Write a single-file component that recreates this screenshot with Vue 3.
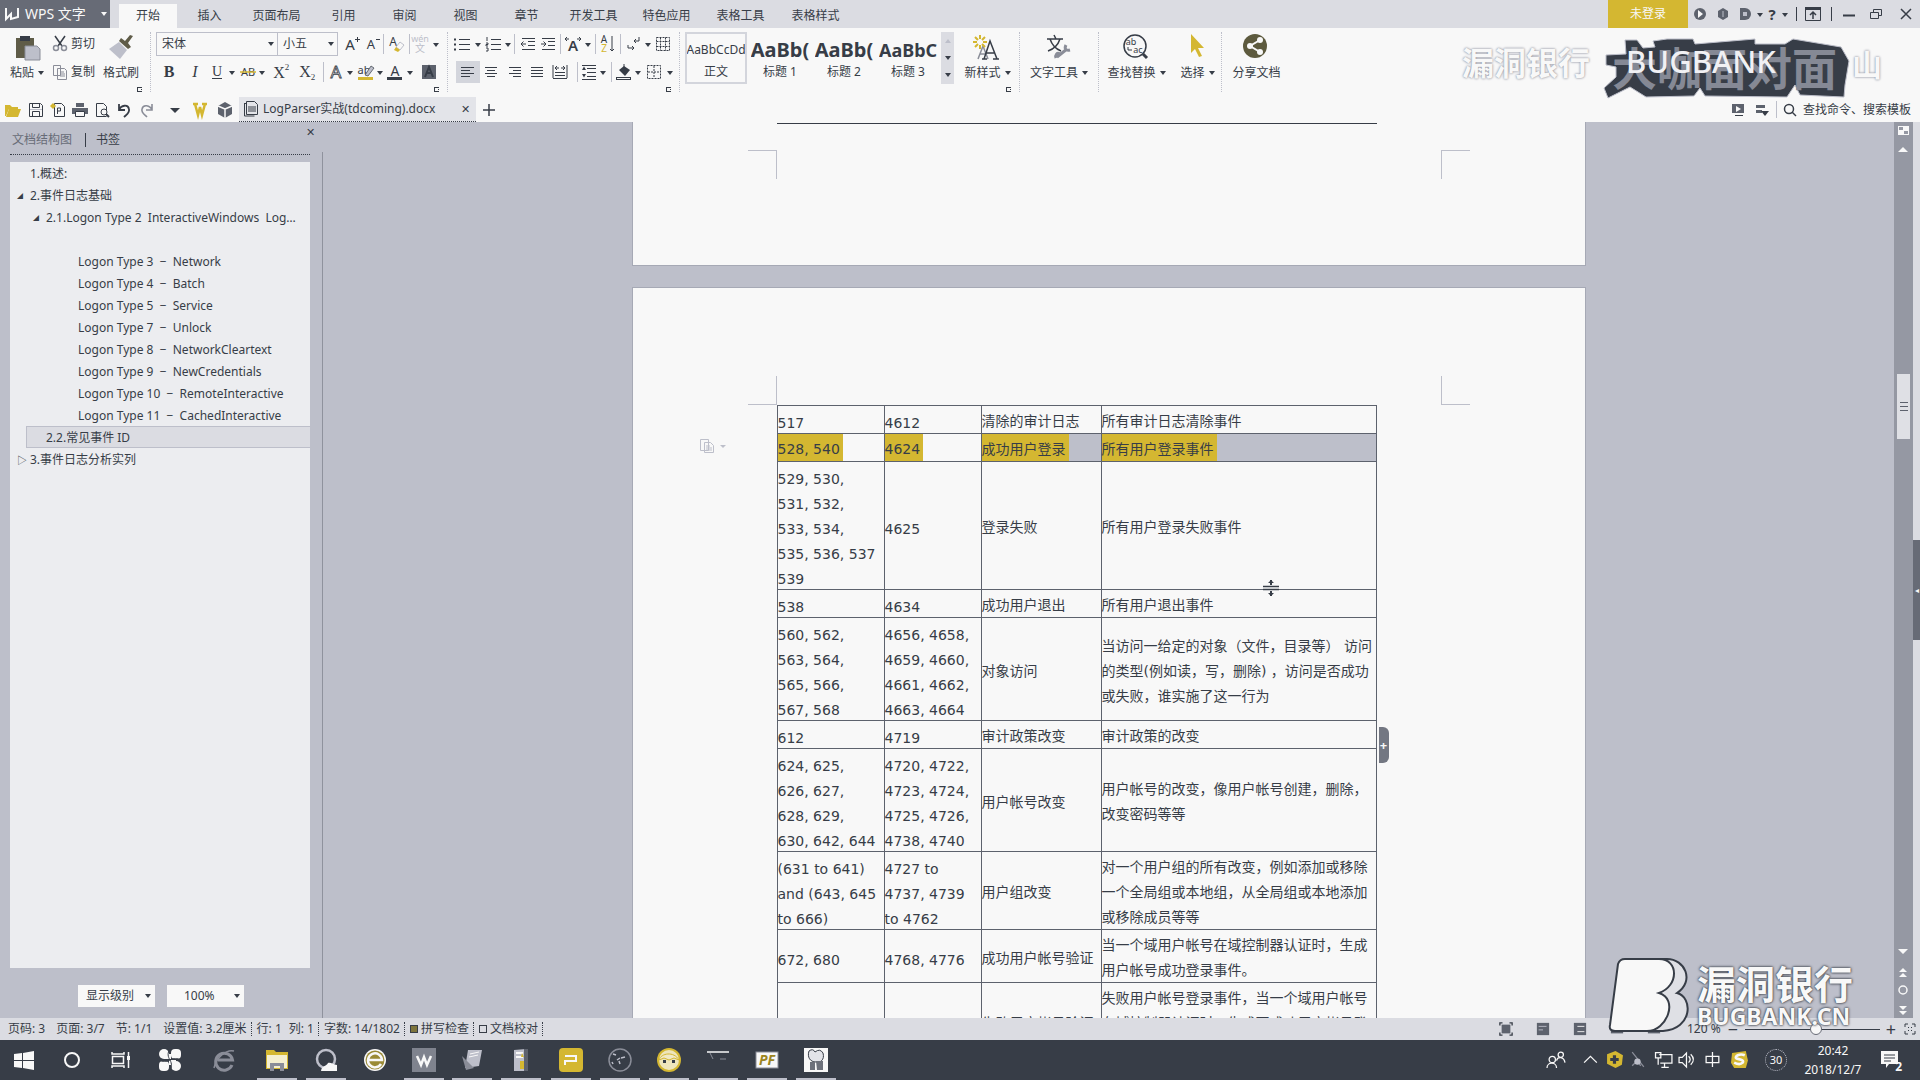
<script setup>
const D = '#373d47'
const G = '#bdbfca'
const Y = '#d4b731'
const W = '#f8f8f8'

const tabs = ['插入', '页面布局', '引用', '审阅', '视图', '章节', '开发工具', '特色应用', '表格工具', '表格样式']

const arrow = { w: 10, label: '更多', d: `<path d="M5 7h6l-3 4z" fill="${D}"/>` }
const arr = (w) => ({ ...arrow, w })
const sep = (w) => ({ w, sep: true })
const lines = (list) => list.map(([x, y, w]) => `<path d="M${x} ${y}h${w}" stroke="${D}" stroke-width="1"/>`).join('')
const glyph = (t, extra = '') =>
  `<text x="8" y="13" text-anchor="middle" font-family="Liberation Serif, serif" font-size="16" fill="${D}" ${extra}>${t}</text>`

const fontRow1 = [
  { w: 22, label: '增大字号', d: `<text x="7" y="14" text-anchor="middle" font-family="Noto Sans, sans-serif" font-size="15" fill="${D}">A</text><path d="M12 3.500h5M14.500 1v5" stroke="${D}" fill="none"/>` },
  { w: 20, label: '减小字号', d: `<text x="7" y="13" text-anchor="middle" font-family="Noto Sans, sans-serif" font-size="13" fill="${D}">A</text><path d="M12 3.500h4" stroke="${D}"/>` },
  sep(2),
  { w: 24, label: '清除格式', d: `<text x="5" y="10" text-anchor="middle" font-family="Noto Sans, sans-serif" font-size="12" fill="${D}">A</text><path d="M8 11l4-5 4 3-4 5z" fill="${W}" stroke="${G}"/><path d="M8 11l4 3-2 2-4-2z" fill="${Y}"/>` },
  sep(2),
  { w: 20, label: '拼音指南', d: `<text x="8" y="6" text-anchor="middle" font-family="Noto Sans, sans-serif" font-size="9" fill="${G}">wén</text><text x="8" y="16" text-anchor="middle" font-family="Noto Sans CJK SC, sans-serif" font-size="10" fill="${G}">文</text>` },
  arr(12)
]
const fontRow2 = [
  { w: 26, label: '加粗', d: glyph('B', 'font-weight="bold"') },
  { w: 26, label: '倾斜', d: glyph('I', 'font-style="italic"') },
  { w: 18, label: '下划线', d: `<text x="8" y="12" text-anchor="middle" font-family="Liberation Serif, serif" font-size="14" fill="${D}">U</text>` + lines([[3, 14.5, 10]]) },
  arr(12),
  { w: 20, label: '删除线', d: `<text x="8" y="12" text-anchor="middle" font-family="Noto Sans, sans-serif" font-size="11" fill="${D}">AB</text><path d="M0 8h16" stroke="${Y}" stroke-width="1.500"/>` },
  arr(8),
  { w: 30, label: '上标', d: `<text x="6" y="14" text-anchor="middle" font-family="Liberation Serif, serif" font-size="16" fill="${D}">X</text><text x="14" y="6" text-anchor="middle" font-family="Liberation Serif, serif" font-size="9" fill="${D}">2</text>` },
  { w: 22, label: '下标', d: `<text x="6" y="13" text-anchor="middle" font-family="Liberation Serif, serif" font-size="16" fill="${D}">X</text><text x="14" y="16" text-anchor="middle" font-family="Liberation Serif, serif" font-size="9" fill="${D}">2</text>` },
  sep(10),
  { w: 16, label: '文字效果', d: `<text x="8" y="14" text-anchor="middle" font-family="Noto Sans, sans-serif" font-size="17" fill="${W}" stroke="${D}" stroke-width="0.800">A</text>` },
  arr(12),
  { w: 20, label: '突出显示', d: `<text x="6" y="10" text-anchor="middle" font-family="Noto Sans, sans-serif" font-size="11" fill="${D}">ab</text><path d="M7 11l6-9 3 2-6 8z" fill="${G}" stroke="${D}" stroke-width="0.700"/><path d="M0 14.500h15" stroke="${Y}" stroke-width="3"/>` },
  arr(8),
  { w: 22, label: '字体颜色', d: `<text x="8" y="12" text-anchor="middle" font-family="Noto Sans, sans-serif" font-size="14" fill="${D}">A</text><path d="M0 14.500h15" stroke="${D}" stroke-width="3"/>` },
  arr(8),
  { w: 30, label: '字符底纹', d: `<rect x="1" y="1" width="14" height="14" fill="#5d626d"/><path d="M4 13l4-10 4 10M6 9h4" stroke="${D}" stroke-width="2" fill="none"/>` }
]
const paraRow1 = [
  { w: 22, label: '项目符号', d: lines([[5, 3.5, 11], [5, 8.5, 11], [5, 13.5, 11]]) + `<path d="M0 2.500h2v2H0zM0 7.500h2v2H0zM0 12.500h2v2H0z" fill="${D}"/>` },
  arr(9),
  { w: 21, label: '编号', d: lines([[6, 3.5, 10], [6, 8.5, 10], [6, 13.5, 10]]) + `<path d="M2 1v4M1 7h2v1.500H1V10h2M1 12h2v3H1" fill="none" stroke="${D}"/>` },
  arr(9),
  sep(5),
  { w: 21, label: '减少缩进', d: lines([[2, 2.5, 13], [8, 5.5, 7], [8, 9.5, 7], [2, 13.5, 13]]) + `<path d="M6 8H1M3.500 5.500L1 8l2.500 2.500" fill="none" stroke="${D}"/>` },
  { w: 20, label: '增加缩进', d: lines([[2, 2.5, 13], [8, 5.5, 7], [8, 9.5, 7], [2, 13.5, 13]]) + `<path d="M1 8h5M3.500 5.500L6 8l-2.500 2.500" fill="none" stroke="${D}"/>` },
  sep(5),
  { w: 20, label: '中文版式', d: `<text x="8" y="15" text-anchor="middle" font-family="Noto Sans, sans-serif" font-size="15" font-weight="600" fill="${D}">A</text><path d="M4 3H0M2 1L0 3l2 2M12 3h4M14 1l2 2-2 2" fill="none" stroke="${D}"/>` },
  arr(9),
  sep(6),
  { w: 18, label: '排序', d: `<text x="5" y="7" text-anchor="middle" font-family="Noto Sans, sans-serif" font-size="10" fill="${D}">A</text><text x="5" y="16" text-anchor="middle" font-family="Noto Sans, sans-serif" font-size="10" fill="${Y}">Z</text><path d="M13 0v15M11 13l2 2 2-2" fill="none" stroke="${D}"/>` },
  sep(8),
  { w: 20, label: '编辑标记', d: `<path d="M13 1v4H8M10 3L8 5l2 2M2 12h6M6 10l2 2-2 2M2 9v3" fill="none" stroke="${D}"/>` },
  arr(7),
  { w: 24, label: '插入表格', d: `<path d="M1.500 1.500h13v13h-13zM1.500 5.500h13M1.500 10.500h13M5.500 1.500v13M10.500 1.500v13" fill="none" stroke="${D}" stroke-dasharray="2 1"/>` }
]
const paraRow2 = [
  { w: 24, label: '左对齐', on: true, d: lines([[1, 3.5, 13], [1, 6.5, 9], [1, 9.5, 13], [1, 12.5, 9]]) },
  { w: 22, label: '居中', d: lines([[2, 3.5, 12], [4, 6.5, 8], [2, 9.5, 12], [4, 12.5, 8]]) },
  { w: 26, label: '右对齐', d: lines([[2, 3.5, 12], [6, 6.5, 8], [2, 9.5, 12], [6, 12.5, 8]]) },
  { w: 18, label: '两端对齐', d: lines([[2, 3.5, 12], [2, 6.5, 12], [2, 9.5, 12], [2, 12.5, 12]]) },
  { w: 28, label: '分散对齐', d: lines([[3, 8.5, 10], [3, 11.5, 10], [1, 14.5, 14]]) + `<path d="M1 1v13M15 1v13M3 4h4M9 4h4M5 2L3 4l2 2M11 2l2 2-2 2" fill="none" stroke="${D}"/>` },
  sep(6),
  { w: 18, label: '行距', d: lines([[6, 4.5, 9], [6, 8.5, 9], [6, 12.5, 9], [1, 1.5, 14], [1, 15.5, 14]]) + `<path d="M3 2.500L1 6h4zM3 13.500L1 10h4z" fill="${D}"/>` },
  arr(10),
  sep(6),
  { w: 20, label: '底纹颜色', d: `<path d="M3 6l5-4 6 4-5 6z" fill="${D}"/><path d="M8 5V0" stroke="${D}"/><rect x="0.500" y="13.500" width="14" height="2" fill="${W}" stroke="${D}"/>` },
  arr(8),
  { w: 24, label: '边框', d: `<path d="M1.500 1.500h13v13h-13zM8 2v12M2 8h12" fill="none" stroke="${D}" stroke-dasharray="2 1"/>` },
  arr(8)
]

const quick = [
  { w: 25, label: '打开', d: `<path d="M0 3h5l2 2h6v2H4l-3 7H0z" fill="${Y}"/><path d="M4 7h12l-3 8H1z" fill="${Y}"/>` },
  { w: 22, label: '保存', d: `<path d="M1.500 1.500h11l2 2v11h-13zM4.500 1.500v4h7v-4M4.500 14.500v-5h7v5" fill="none" stroke="${D}"/><path d="M2 7h12v1H2z" fill="${G}"/>` },
  { w: 22, label: '输出PDF', d: `<path d="M4.500 1.500h7l3 3v10h-10zM7.500 12V6h3v3h-3" fill="none" stroke="${D}"/><path d="M0 4l3-3 3 3-3 3z" fill="${Y}"/>` },
  { w: 22, label: '打印', d: `<path d="M4 1h8v4H4zM0 6h16v6H0z" fill="#5d626d"/><path d="M3.500 9.500h9v5h-9z" fill="${W}" stroke="${D}"/>` },
  { w: 22, label: '打印预览', d: `<path d="M12.500 14.500h-10v-13h7l3 3V8" fill="none" stroke="${D}"/><circle cx="10" cy="10" r="3" fill="${W}" stroke="${D}"/><path d="M12 12l3 3" stroke="${D}" stroke-width="2"/>` },
  { w: 22, label: '撤消', d: `<path d="M3 2v6h6M3 8c2-5 9-6 10-1 1 4-3 6-5 8" fill="none" stroke="${D}" stroke-width="1.800"/>` },
  { w: 24, label: '恢复', d: `<path d="M13 2v6H7M13 8C11 3 4 2 3 7c-1 4 3 6 5 8" fill="none" stroke="#8a8d98" stroke-width="1.600"/>` },
  { w: 31, label: '自定义', d: `<path d="M3 6h10l-5 5z" fill="${D}"/>` },
  { w: 20, label: 'WPS', d: `<path d="M1 2h5M10 2h5M3 2l3 11 2-8 2 8 3-11" fill="none" stroke="${Y}" stroke-width="2.500"/>` },
  { w: 29, label: '素材', d: `<path d="M8 0l7 4v8l-7 4-7-4V4z" fill="#5d626d"/><path d="M8 7v9M8 7L1 4M8 7l7-3" stroke="${W}" stroke-width="1.500"/>` }
]

const big = [
  { w: 63, label: '新样式', more: true, launch: true, d: `<path d="M5 26l5-13 5 13M7 21h6" stroke="#8a8d98" fill="none" stroke-width="1.500"/><path d="M11 26l6-18 7 18M13 20h9M9 26h5M20 26h6" stroke="${D}" fill="none" stroke-width="1.500"/><path d="M7 2v4M7 12v4M0 9h4M10 9h4M2 4l3 3M12 4L9 7M2 14l3-3M12 14l-3-3" stroke="${Y}" stroke-width="2"/>` },
  { w: 79, label: '文字工具', more: true, bar: true, d: `<path d="M2 6h16M9 2l2 4M5 6c2 6 6 10 11 12M15 6c-2 6-6 10-12 12" stroke="${D}" fill="none" stroke-width="1.500"/><path d="M12 24l10-8M21 12c-2 4 0 6 4 5M15 21c-3-2-5 1-4 4" stroke="#8a8d98" stroke-width="3" fill="none"/>` },
  { w: 76, label: '查找替换', more: true, bar: true, d: `<circle cx="13" cy="13" r="11" fill="none" stroke="${D}" stroke-width="1.500"/><path d="M21 21l4 4" stroke="${D}" stroke-width="3"/><text x="9" y="12" text-anchor="middle" font-family="Noto Sans, sans-serif" font-size="9" fill="${D}">ab</text><text x="16" y="20" text-anchor="middle" font-family="Noto Sans, sans-serif" font-size="9" fill="${D}">ac</text><path d="M6 14v3h4" fill="none" stroke="${D}"/>` },
  { w: 47, label: '选择', more: true, d: `<path d="M8 1v19l4-4 4 8 3-1-4-8h6z" fill="${Y}"/>` },
  { w: 70, label: '分享文档', bar: true, d: `<circle cx="13" cy="13" r="12" fill="#5d5a3e"/><path d="M18 7l-10 6 10 6" stroke="${W}" stroke-width="2" fill="none"/><circle cx="18" cy="7" r="3" fill="${W}"/><circle cx="8" cy="13" r="3" fill="${W}"/><circle cx="18" cy="19" r="3" fill="${W}"/>` }
]

const styles = [
  { s: 'AaBbCcDd', n: '正文', on: true },
  { s: 'AaBb(', n: '标题 1', h: 'h1' },
  { s: 'AaBb(', n: '标题 2', h: 'h1' },
  { s: 'AaBbC', n: '标题 3', h: 'h3' }
]

const wins = [
  { w: 24, label: '皮肤', d: `<circle cx="8" cy="8" r="6" fill="#5d626d"/><path d="M6 4l5 4-5 4z" fill="${W}"/>` },
  { w: 22, label: '设置', d: `<path d="M8 2l5 3v6l-5 3-5-3V5z" fill="#5d626d"/><path d="M8 5v6" stroke="${G}"/>` },
  { w: 22, label: '备份', d: `<path d="M3 2h5a6 6 0 0 1 0 12H3z" fill="#5d626d"/><path d="M6 6h4v4H6z" fill="${G}"/>` },
  arr(8),
  { w: 16, label: '帮助', d: `<text x="8" y="14" text-anchor="middle" font-family="Noto Sans, sans-serif" font-size="15" font-weight="bold" fill="${D}">?</text>` },
  arr(10),
  sep(12),
  { w: 22, label: '功能区', d: `<path d="M0.500 1.500h15v13h-15z" fill="none" stroke="${D}"/><path d="M0 1h16v3H0z" fill="${D}"/><path d="M8 13V7M5 9l3-3 3 3" fill="none" stroke="${D}" stroke-width="1.500"/>` },
  sep(14),
  { w: 22, label: '最小化', d: `<path d="M2 9.500h12" stroke="${D}" stroke-width="2"/>` },
  { w: 32, label: '还原', d: `<path d="M2.500 6.500h8v6h-8zM5.500 6V3.500h8v6H11" fill="none" stroke="${D}"/>` },
  { w: 28, label: '关闭', d: `<path d="M3 3l10 10M13 3L3 13" stroke="${D}" stroke-width="1.500"/>` }
]

const outline = [
  { t: '1.概述:', l: 1 },
  { t: '2.事件日志基础', l: 1, m: '◢' },
  { t: '2.1.Logon Type 2  InteractiveWindows  Log…', l: 2, m: '◢' },
  { t: '', l: 3 },
  { t: 'Logon Type 3  −  Network', l: 3 },
  { t: 'Logon Type 4  −  Batch', l: 3 },
  { t: 'Logon Type 5  −  Service', l: 3 },
  { t: 'Logon Type 7  −  Unlock', l: 3 },
  { t: 'Logon Type 8  −  NetworkCleartext', l: 3 },
  { t: 'Logon Type 9  −  NewCredentials', l: 3 },
  { t: 'Logon Type 10  −  RemoteInteractive', l: 3 },
  { t: 'Logon Type 11  −  CachedInteractive', l: 3 },
  { t: '2.2.常见事件 ID', l: 2, on: true },
  { t: '3.事件日志分析实列', l: 1, m: '▷' }
]

const rows = [
  [['517'], ['4612'], ['清除的审计日志'], ['所有审计日志清除事件']],
  [['528, 540'], ['4624'], ['成功用户登录'], ['所有用户登录事件']],
  [['529, 530,', '531, 532,', '533, 534,', '535, 536, 537', '539'], ['4625'], ['登录失败'], ['所有用户登录失败事件']],
  [['538'], ['4634'], ['成功用户退出'], ['所有用户退出事件']],
  [['560, 562,', '563, 564,', '565, 566,', '567, 568'], ['4656, 4658,', '4659, 4660,', '4661, 4662,', '4663, 4664'], ['对象访问'], ['当访问一给定的对象（文件，目录等） 访问', '的类型(例如读，写，删除) ，访问是否成功', '或失败，谁实施了这一行为']],
  [['612'], ['4719'], ['审计政策改变'], ['审计政策的改变']],
  [['624, 625,', '626, 627,', '628, 629,', '630, 642, 644'], ['4720, 4722,', '4723, 4724,', '4725, 4726,', '4738, 4740'], ['用户帐号改变'], ['用户帐号的改变，像用户帐号创建，删除，', '改变密码等等']],
  [['(631 to 641)', 'and (643, 645', 'to 666)'], ['4727 to', '4737, 4739', 'to 4762'], ['用户组改变'], ['对一个用户组的所有改变，例如添加或移除', '一个全局组或本地组，从全局组或本地添加', '或移除成员等等']],
  [['672, 680'], ['4768, 4776'], ['成功用户帐号验证'], ['当一个域用户帐号在域控制器认证时，生成', '用户帐号成功登录事件。']],
  [[''], [''], ['失败用户帐号验证'], ['失败用户帐号登录事件，当一个域用户帐号', '在域控制器认证时，生成不成功用户帐号登', '录事件。']]
]

const apps = [
  { w: 48, label: '开始', d: `<path d="M2 6l8-1v7H2zM11 5l11-2v9H11zM2 13h8v7l-8-1zM11 13h11v9l-11-2z" fill="${W}"/>` },
  { w: 48, label: '搜索', d: `<ellipse cx="12" cy="12" rx="7" ry="7" fill="none" stroke="${W}" stroke-width="2"/>` },
  { w: 48, label: '任务视图', d: `<path d="M4.500 8.500h11v7h-11zM4 4v2h12V4M4 20v-2h12v2M20.500 4v16" fill="none" stroke="${W}" stroke-width="1.500"/><path d="M19 8h3v4h-3z" fill="${W}"/>` },
  { w: 52, label: '云盘', d: `<rect x="1" y="1" width="10" height="10" rx="5" fill="${W}"/><rect x="13" y="1" width="10" height="10" rx="4" fill="${W}"/><rect x="1" y="13" width="10" height="10" rx="4" fill="${W}"/><rect x="13" y="13" width="10" height="10" rx="5" fill="${W}"/><path d="M6 6h7v5H6zM11 12h7v5h-7z" fill="${W}"/><path d="M12 1c-3 4-2 8 0 11 2 4 2 7 0 11M1 12c4 2 7 2 11 0s7-2 11 0" fill="none" stroke="${D}"/>` },
  { w: 56, label: 'Internet Explorer', d: `<path d="M20 17A8.500 8.500 0 1 1 20.500 12H6" fill="none" stroke="#8a8d98" stroke-width="3"/><path d="M2 20C4 10 14 1 22 3" fill="none" stroke="#8a8d98" stroke-width="1.500"/>` },
  { w: 50, run: true, label: '文件资源管理器', d: `<path d="M1 2h8l2 2h12v17H1z" fill="${Y}"/><path d="M2 7h20v13H2z" fill="#f4efd0"/><path d="M5 23v-8h14v8h-4v-5H9v5z" fill="#8a8d98"/>` },
  { w: 48, run: true, label: '网盘', d: `<circle cx="12" cy="11" r="9" fill="none" stroke="${G}" stroke-width="2.500"/><path d="M7 23c1-6 5-4 7-8 3-1 5 2 9 2v6z" fill="${W}"/>` },
  { w: 50, label: '浏览器', d: `<circle cx="12" cy="12" r="11" fill="${W}"/><circle cx="12" cy="12" r="9.500" fill="#9a8a35"/><path d="M18 16a7 7 0 1 1 1-4H6" fill="none" stroke="${W}" stroke-width="2.500"/>` },
  { w: 48, run: true, label: 'WPS 文字', d: `<rect x="0" y="0" width="24" height="24" fill="#7f838e"/><path d="M5 8l4 9 3-8 3 8 4-9" fill="none" stroke="${W}" stroke-width="2.500"/>` },
  { w: 48, run: true, label: '记事本', d: `<path d="M8 2h14l-3 16-14 2z" fill="${G}"/><path d="M2 8l12 12-8 2z" fill="#8a8d98"/><path d="M10 6l9-2M9 9l9-2" stroke="${W}"/>` },
  { w: 50, run: true, label: '服务器', d: `<path d="M5 2l12-1v22H5z" fill="${G}"/><path d="M15 1h4v22h-4z" fill="#5d626d"/><path d="M7 5h7M7 9h7" stroke="${W}" stroke-width="2"/><path d="M11 13h4v8h-4zM13 5l2 4h-3z" fill="${Y}"/>` },
  { w: 50, run: true, label: '演示', d: `<rect x="0" y="0" width="24" height="24" rx="4" fill="${Y}"/><path d="M6 17v-4h11V8H6" fill="none" stroke="${W}" stroke-width="2"/>` },
  { w: 48, run: true, label: '时钟', d: `<circle cx="12" cy="12" r="11" fill="none" stroke="#8a8d98" stroke-width="1.500"/><path d="M5 6l3 1M9 12l3-2M13 10l4-1M11 13l1 3M4 14l1 2" stroke="${G}" stroke-width="1.500"/>` },
  { w: 50, run: true, label: '头像', d: `<circle cx="12" cy="12" r="12" fill="${Y}"/><circle cx="12" cy="12" r="10" fill="#eee5bb"/><path d="M2 12c2-7 15-9 20 0l-5-2-5 2-5-2z" fill="#f1e9c5" stroke="${Y}"/><path d="M6 12h3v3H6zM15 12h3v3h-3z" fill="${D}"/>` },
  { w: 48, run: true, label: '终端', d: `<path d="M1 4h22" stroke="${W}" stroke-width="1.500"/><path d="M4 5l3 6M14 11h6" stroke="#8a8d98"/>` },
  { w: 50, run: true, label: 'PF', d: `<rect x="1" y="4" width="22" height="16" fill="${W}" stroke="#8a8d98"/><text x="12" y="17" text-anchor="middle" font-family="Noto Sans, sans-serif" font-size="14" font-weight="bold" font-style="italic" fill="#9c8520">PF</text>` },
  { w: 48, run: true, label: '画图', d: `<rect x="0" y="0" width="24" height="24" fill="${W}"/><path d="M5 3q4-3 6 1 5-4 8 1c2 7-3 10-7 9-6 0-9-5-7-11z" fill="#e2e3e8" stroke="${D}"/><path d="M6 14h5v8H6zM12 13h7v9h-6z" fill="#6d717b"/>` }
]

const tray = [
  { w: 38, label: '人脉', d: `<circle cx="5" cy="8" r="3"/><circle cx="13" cy="3.500" r="2.500"/><path d="M0 16c0-6 9-6 9 0M9 9c1-4 7-4 8 2"/>` },
  { w: 32, label: '显示隐藏的图标', d: `<path d="M2 11l6-6 6 6"/>` },
  { w: 16, label: '卫士', d: `<path d="M1 3l8-3 7 4-1 9-6 3-8-4z" fill="${Y}" stroke="none"/><path d="M8 4v8M4 8h8" stroke="${D}" stroke-width="3"/>` },
  { w: 30, label: '触控', d: `<path d="M3 1l11 14M3 14l5-5 3 5" stroke="#8a8d98"/><circle cx="8" cy="10" r="3" fill="${G}" stroke="none"/>` },
  { w: 22, label: '网络', d: `<path d="M4 3.500h12v8H5M9 12v3M6 15.500h7M0.500 1.500h5v5h-5zM3 7v6"/>` },
  { w: 24, label: '音量', d: `<path d="M1 6v5h3l4 4V2L4 6zM10 5q3 3 0 6M12 3q5 5 0 10"/>` },
  { w: 28, label: '输入法', d: `<path d="M2 5h12v6H2zM8 1v14"/>` },
  { w: 26, label: '搜狗', d: `<path d="M1 2l13-2 2 9-2 7H3L0 11z" fill="${Y}" stroke="none"/><path d="M13 4C8 2 3 5 5 7c2 1 8 1 6 4-2 2-6 1-8 0" stroke-width="2.500"/>` }
]

const views = [
  `<path d="M1 4V1h3M12 1h3v3M1 12v3h3M12 15h3v-3"  fill="none" stroke="${D}" stroke-width="1.500"/><path d="M3 3h10v10H3z" fill="#5d626d"/>`,
  `<path d="M1 1h14v14H1z" fill="#5d626d"/><path d="M3 5h9M3 9h5" stroke="${G}"/>`,
  `<path d="M1 1h14v14H1z" fill="#5d626d"/><path d="M5 5h8M5 11h8" stroke="${W}"/>`,
  `<path d="M1 3h14v10H1z" fill="#5d626d"/>`,
  `<path d="M1 3h14v10H1z" fill="#5d626d"/>`
]
</script>

<template>
  <div class="app">
    <header class="title">
      <button class="brand">
        <svg width="16" height="16" viewBox="0 0 16 16"><path d="M2 2v11l5-5v5l7-2V2" fill="none" stroke="#f8f8f8" stroke-width="2" /></svg>
        WPS 文字
        <i class="tri light"></i>
      </button>
      <nav class="tabs">
        <a href="#" class="tab on">开始</a>
        <a v-for="t in tabs" :key="t" href="#" class="tab" :class="{ wide: t.length > 2, extra: t.startsWith('表格') }">{{ t }}</a>
      </nav>
      <button class="login">未登录</button>
      <div class="wins">
        <template v-for="(t, i) in wins" :key="i">
          <span v-if="t.sep" class="sep dark" :style="{ width: t.w + 'px' }"></span>
          <button v-else class="tool" :aria-label="t.label" :style="{ width: t.w + 'px' }"><svg width="16" height="16" viewBox="0 0 16 16" v-html="t.d"></svg></button>
        </template>
      </div>
    </header>

    <section class="ribbon">
      <div class="group clip">
        <button class="big paste">
          <svg width="28" height="28" viewBox="0 0 28 28"><path d="M3 5h18v20H3z" fill="#5f5c48" /><path d="M7 3h10v5H7z" fill="#373d47" /><path d="M12 13h12l3 3v11H12z" fill="#bdbfca" stroke="#8a8d98" /></svg>
          <span>粘贴<i class="tri"></i></span>
        </button>
        <div class="pair">
          <button class="small"><svg width="16" height="16" viewBox="0 0 16 16"><path d="M3 0l7 10M13 0L6 10" stroke="#373d47" stroke-width="1.500" /><circle cx="4" cy="12" r="2.500" fill="none" stroke="#8a8d98" stroke-width="1.500" /><circle cx="12" cy="12" r="2.500" fill="none" stroke="#8a8d98" stroke-width="1.500" /></svg>剪切</button>
          <button class="small"><svg width="16" height="16" viewBox="0 0 16 16"><path d="M1.500 1.500h7v10h-7zM5.500 4.500h7l2 2v9h-9z" fill="#f8f8f8" stroke="#8a8d98" /><path d="M8 8h4M8 10h5M8 12h5" stroke="#8a8d98" /></svg>复制</button>
        </div>
        <button class="big brush">
          <svg width="28" height="28" viewBox="0 0 28 28"><path d="M26 3l-3-1-5 6-4-3-2 3 9 8 3-2-3-4z" fill="#5f5c48" /><path d="M12 9l8 8-7 9L2 16z" fill="#bdbfca" /></svg>
          <span>格式刷</span>
        </button>
        <i class="launch"></i>
      </div>

      <div class="group font">
        <div class="row">
          <span class="pick name"><select aria-label="字体"><option>宋体</option></select></span>
          <span class="pick size"><select aria-label="字号"><option>小五</option></select></span>
          <template v-for="(t, i) in fontRow1" :key="i">
            <span v-if="t.sep" class="sep" :style="{ width: t.w + 'px' }"></span>
            <button v-else class="tool" :aria-label="t.label" :style="{ width: t.w + 'px' }"><svg width="16" height="16" viewBox="0 0 16 16" v-html="t.d"></svg></button>
          </template>
        </div>
        <div class="row">
          <template v-for="(t, i) in fontRow2" :key="i">
            <span v-if="t.sep" class="sep" :style="{ width: t.w + 'px' }"></span>
            <button v-else class="tool" :aria-label="t.label" :style="{ width: t.w + 'px' }"><svg width="16" height="16" viewBox="0 0 16 16" v-html="t.d"></svg></button>
          </template>
        </div>
        <i class="launch"></i>
      </div>

      <div class="group para">
        <div v-for="(r, k) in [paraRow1, paraRow2]" :key="k" class="row">
          <template v-for="(t, i) in r" :key="i">
            <span v-if="t.sep" class="sep" :style="{ width: t.w + 'px' }"></span>
            <button v-else class="tool" :class="{ on: t.on }" :aria-label="t.label" :style="{ width: t.w + 'px' }"><svg width="16" height="16" viewBox="0 0 16 16" v-html="t.d"></svg></button>
          </template>
        </div>
        <i class="launch"></i>
      </div>

      <div class="gallery">
        <button v-for="s in styles" :key="s.n" class="style" :class="{ on: s.on }">
          <b :class="s.h">{{ s.s }}</b><span>{{ s.n }}</span>
        </button>
        <div class="gscroll"><i class="tri pale"></i><i class="tri"></i><i class="tri"></i></div>
      </div>

      <div v-for="b in big" :key="b.label" class="bigs" :class="{ bar: b.bar }" :style="{ width: b.w + 'px' }">
        <button class="big">
          <svg width="28" height="28" viewBox="0 0 28 28" v-html="b.d"></svg>
          <span>{{ b.label }}<i v-if="b.more" class="tri"></i></span>
        </button>
        <i v-if="b.launch" class="launch"></i>
      </div>
    </section>

    <section class="files">
      <button v-for="t in quick" :key="t.label" class="tool" :aria-label="t.label" :style="{ width: t.w + 'px' }"><svg width="16" height="16" viewBox="0 0 16 16" v-html="t.d"></svg></button>
      <div class="file">
        <svg width="16" height="16" viewBox="0 0 16 16"><path d="M1.500 2.500h2M3.500 0.500h8l3 3v10h-11zM1.500 2v13h10" fill="none" stroke="#373d47" /><path d="M6 5v6M8 5v6M10 5v6M12 5v6" stroke="#373d47" /></svg>
        <span>LogParser实战(tdcoming).docx</span>
        <button class="x" aria-label="关闭文档">✕</button>
      </div>
      <button class="plus" aria-label="新建文档"><svg width="14" height="14" viewBox="0 0 14 14"><path d="M7 1v12M1 7h12" stroke="#373d47" stroke-width="1.500" /></svg></button>
      <div class="find">
        <svg width="16" height="16" viewBox="0 0 16 16"><path d="M2 2h12v9H2z" fill="#5d626d" /><path d="M6 4l5 3-5 3z" fill="#f8f8f8" /><path d="M5 13.500h8" stroke="#373d47" /></svg>
        <svg width="16" height="16" viewBox="0 0 16 16"><path d="M2 3h9v3H2zM2 8h6v3H2z" fill="#5d626d" /><path d="M7 9h8l-4 5z" fill="#373d47" /></svg>
        <i></i>
        <svg width="14" height="14" viewBox="0 0 14 14"><circle cx="6" cy="6" r="4.500" fill="none" stroke="#373d47" stroke-width="1.500" /><path d="M9 9l4 4" stroke="#373d47" stroke-width="1.500" /></svg>
        <a href="#">查找命令、搜索模板</a>
      </div>
    </section>

    <main class="work">
      <aside class="side">
        <div class="head">
          <a href="#" class="cur">文档结构图</a><i></i><a href="#">书签</a>
          <button class="x" aria-label="关闭窗格">✕</button>
        </div>
        <ul class="tree">
          <li v-for="(o, i) in outline" :key="i" :class="['l' + o.l, { on: o.on }]"><em :class="{ open: o.m === '◢' }">{{ o.m }}</em>{{ o.t }}</li>
        </ul>
        <div class="foot">
          <span class="pick"><select aria-label="显示级别"><option>显示级别</option></select></span>
          <span class="pick"><select aria-label="缩放"><option>100%</option></select></span>
        </div>
      </aside>

      <div class="canvas">
        <div class="page first">
          <hr />
          <div class="marks"><i class="ml"></i><i class="mr"></i></div>
        </div>
        <div class="page second">
          <div class="marks up"><i class="ml"></i><i class="mr"></i></div>
          <table>
            <colgroup><col class="c1" /><col class="c2" /><col class="c3" /><col class="c4" /></colgroup>
            <tbody>
              <tr v-for="(r, i) in rows" :key="i" :class="{ sel: i === 1 }">
                <td v-for="(c, j) in r" :key="j"><div v-for="(t, k) in c" :key="k"><span>{{ t }}</span></div></td>
              </tr>
            </tbody>
          </table>
          <svg class="opts" width="32" height="18" viewBox="0 0 32 18"><path d="M2.500 2.500h8v11h-8zM6.500 5.500h6l3 3v7h-9z" fill="#f8f8f8" stroke="#bdbfca" /><path d="M8 9h4M8 11h6M8 13h6" stroke="#bdbfca" /><path d="M22 8h6l-3 3z" fill="#bdbfca" /></svg>
          <svg class="cursor" width="18" height="18" viewBox="0 0 18 18"><path d="M1 7.500h16M1 10.500h16" stroke="#373d47" stroke-width="1.500" /><path d="M9 1v5M9 12v5" stroke="#373d47" stroke-width="2" /><path d="M6 4h6L9 1zM6 14h6l-3 3z" fill="#373d47" /></svg>
          <button class="addcol" aria-label="添加列">+</button>
        </div>
      </div>

      <div class="scroll">
        <svg width="19" height="36" viewBox="0 0 19 36"><path d="M4 4h11v9H4z" fill="#f8f8f8" /><path d="M5 5h4v3H5zM10 9h4v3h-4z" fill="#9598a3" /><path d="M4 30l5-5 5 5z" fill="#f8f8f8" /></svg>
        <div class="thumb"><i></i></div>
        <svg width="19" height="72" viewBox="0 0 19 72"><path d="M4 3l5 5 5-5zM5 26l4-4 4 4zM5 31l4-4 4 4zM5 60l4 4 4-4zM5 65l4 4 4-4z" fill="#f8f8f8" /><circle cx="9" cy="44" r="4" fill="none" stroke="#f8f8f8" stroke-width="1.500" /></svg>
      </div>
      <div class="dock"><button aria-label="展开任务窗格">◂</button></div>
    </main>

    <footer class="status">
      <span class="s1">页码: 3</span><span class="s1">页面: 3/7</span><span class="s1">节: 1/1</span><span class="s2">设置值: 3.2厘米</span>
      <span class="s3">行: 1</span><span class="s2">列: 1</span><span class="s2">字数: 14/1802</span>
      <label class="s2"><input type="checkbox" checked />拼写检查</label>
      <label class="s2"><input type="checkbox" />文档校对</label>
      <div class="zoom">
        <svg v-for="(v, i) in views" :key="i" class="view" width="14" height="14" viewBox="0 0 16 16" v-html="v"></svg>
        <i class="tri"></i>
        <span class="pct">120 %</span><b>−</b>
        <input type="range" min="0" max="100" value="53" aria-label="显示比例" />
        <b>+</b>
        <svg width="14" height="14" viewBox="0 0 14 14"><path d="M2 5V2h3M9 2h3v3M2 9v3h3M9 12h3V9M5 5l1 1M9 5L8 6M5 9l1-1M9 9L8 8" fill="none" stroke="#373d47" /></svg>
      </div>
    </footer>

    <footer class="taskbar">
      <button v-for="a in apps" :key="a.label" class="app-btn" :class="{ run: a.run }" :aria-label="a.label" :style="{ width: a.w + 'px' }"><svg width="24" height="24" viewBox="0 0 24 24" v-html="a.d"></svg></button>
      <div class="tray">
        <button v-for="t in tray" :key="t.label" class="tool" :aria-label="t.label" :style="{ width: t.w + 'px' }"><svg width="18" height="18" viewBox="0 0 17 17" fill="none" stroke="#f8f8f8" stroke-width="1.200" v-html="t.d"></svg></button>
        <span class="temp">30</span>
        <time>20:42<br />2018/12/7</time>
        <button class="note" aria-label="通知"><svg width="22" height="22" viewBox="0 0 22 22"><path d="M1 2h17v13H9l-3 4v-4H1z" fill="#f8f8f8" /><path d="M4 6h11M4 9h11M4 12h7" stroke="#373d47" /></svg><b>2</b></button>
      </div>
    </footer>

    <div class="mark-top">
      <span class="org">漏洞银行</span>
      <span class="tail">山</span>
      <svg width="250" height="60" viewBox="0 0 250 60"><path d="M2 17l20-1-1-14 12 0 6 8 12-1-2-6 14-2 26 0 2 5 60-5 0 5 30 0 8-5 48 8 8 14-4 24-1 12-44-2-5-10-8 12-82-1-5-8-6 8-48 1-16-10-22 11-4-10 12-11 0-10-10-2z" fill="#373d47" stroke="#bdbfca" /></svg>
      <span class="show">大咖面对面</span>
      <span class="en">BUGBANK</span>
    </div>

    <div class="mark-bottom">
      <svg width="86" height="78" viewBox="0 0 86 78"><path d="M48 3h12c18 0 28 22 10 34 16 4 16 36-14 38H40z" fill="#dfe0e5" stroke="#373d47" stroke-width="2" /><path d="M18 3h34c20 0 20 27 0 34 20 6 8 38-12 38H8c-4 0-6-2-5-6L11 8c1-3 3-5 7-5z" fill="#f8f8f8" stroke="#373d47" stroke-width="2" /></svg>
      <div><strong>漏洞银行</strong><em>BUGBANK.CN</em></div>
    </div>
  </div>
</template>

<style>
html, body { margin: 0; background: #bdbfca; }
</style>

<style scoped>
.app { position: relative; display: flex; flex-direction: column; height: 100vh; overflow: hidden; color: #373d47; font: 12px/16px "Noto Sans", "Noto Sans CJK SC", sans-serif; background: #f8f8f8; }
.app *, .app *::before, .app *::after { box-sizing: border-box; }
button { padding: 0; border: 0; background: none; font: inherit; color: inherit; }
a { color: inherit; text-decoration: none; white-space: nowrap; }
svg { display: block; flex: none; overflow: visible; }
.tri { display: inline-block; flex: none; border: 3px solid transparent; border-top: 4px solid #373d47; border-bottom: 0; }
.tri.light { border-top-color: #f8f8f8; }
.tri.pale { border-top: 0; border-bottom: 4px solid #bdbfca; }
.tool { display: flex; flex: none; align-items: center; justify-content: center; height: 22px; }
.tool.on { background: #d3d5dc; }
.sep { flex: none; height: 20px; background: linear-gradient(#bdbfca, #bdbfca) center / 1px 100% no-repeat; }
.sep.dark { height: 14px; background-image: linear-gradient(#373d47, #373d47); }

.title { display: flex; flex: none; height: 28px; background: #dbdce2; }
.brand { display: flex; align-items: center; width: 110px; padding: 0 4px; gap: 5px; background: #676b76; color: #f8f8f8; font-size: 14px; white-space: nowrap; }
.brand .tri { margin-left: 10px; }
.tabs { display: flex; flex: 1; margin-left: 9px; }
.tab { width: 61px; padding-top: 8px; text-align: center; }
.tab.wide { width: 73px; }
.tab.extra { width: 75px; }
.tab.on { width: 58px; margin-top: 4px; margin-right: 2px; padding-top: 4px; background: #f8f8f8; }
.login { width: 80px; background: #d4b731; color: #f8f8f8; }
.wins { display: flex; align-items: center; width: 232px; }

.ribbon { display: flex; flex: none; height: 69px; padding-top: 4px; }
.group { position: relative; height: 60px; border-right: 1px dotted #bdbfca; }
.launch { position: absolute; right: 8px; bottom: 0; width: 5px; height: 5px; border: 1px solid #373d47; border-right-style: dotted; }
.clip { display: flex; width: 151px; padding-left: 7px; }
.big { display: flex; flex-direction: column; align-items: center; gap: 4px; height: 52px; padding-top: 1px; white-space: nowrap; }
.big span { display: flex; align-items: center; gap: 4px; line-height: 16px; }
.paste { width: 40px; }
.pair { display: flex; flex-direction: column; gap: 4px; width: 54px; padding-left: 5px; }
.small { display: flex; align-items: center; gap: 3px; height: 24px; white-space: nowrap; }
.brush { width: 40px; }
.font { width: 297px; padding-left: 5px; }
.para { width: 232px; padding-left: 3px; }
.row { display: flex; align-items: center; height: 24px; margin-bottom: 4px; }
.para .tool.on { margin-left: 5px; }
.pick { position: relative; display: block; flex: none; }
.pick select { width: 100%; height: 100%; padding: 0 5px; border: 1px solid #bdbfca; border-radius: 0; background: #f8f8f8; color: #373d47; font: inherit; appearance: none; }
.pick::after { content: ""; position: absolute; right: 4px; top: 10px; border: 3px solid transparent; border-top: 4px solid #373d47; border-bottom: 0; }
.pick.name { width: 122px; height: 24px; }
.pick.size { width: 61px; height: 24px; margin-left: -1px; margin-right: 2px; }

.gallery { display: flex; flex: none; gap: 2px; width: 276px; height: 52px; padding-left: 5px; }
.style { display: flex; flex-direction: column; align-items: center; justify-content: space-between; width: 62px; padding: 6px 0 2px; overflow: hidden; white-space: nowrap; border: 2px solid transparent; }
.style.on { border-color: #d3d5dc; }
.style b { height: 20px; font-weight: 400; font-size: 12px; line-height: 20px; }
.style b.h1 { font-weight: 700; font-size: 20px; }
.style b.h3 { font-weight: 700; font-size: 18px; }
.gscroll { display: flex; flex-direction: column; align-items: center; justify-content: space-around; width: 13px; background: #dbdce2; }
.bigs { position: relative; display: flex; flex: none; justify-content: center; height: 60px; }
.bigs.bar { border-left: 1px dotted #bdbfca; }

.files { display: flex; flex: none; align-items: center; height: 25px; }
.file { display: flex; align-items: center; width: 237px; height: 25px; padding: 0 6px 0 4px; gap: 4px; background: #e3e4e9; border-bottom: 1px dotted #373d47; }
.file span { flex: 1; font-size: 12px; white-space: nowrap; }
.x { font-size: 11px; }
.plus { margin-left: 6px; }
.find { display: flex; align-items: center; gap: 6px; margin-left: auto; padding-right: 9px; }
.find svg + svg { margin-left: 2px; }
.find i { width: 1px; height: 17px; background: #bdbfca; }

.work { display: flex; flex: 1; min-height: 0; background: #bdbfca; }
.side { display: flex; flex-direction: column; flex: none; width: 323px; padding: 0 13px 0 10px; background: linear-gradient(#8f929d, #8f929d) right 0 top 30px / 1px 100% no-repeat; }
.head { display: flex; align-items: center; height: 33px; padding: 3px 0 0 2px; border-bottom: 1px dotted #373d47; }
.head .cur { color: #686c77; }
.head i { width: 1px; height: 14px; margin: 0 10px 0 13px; background: #373d47; }
.head .x { margin: -16px -5px 0 auto; }
.tree { flex: 1; margin: 7px 0 0; padding: 0; list-style: none; background: #ecedf0; }
.tree li { height: 22px; line-height: 24px; white-space: pre; overflow: hidden; }
.tree em { display: inline-block; width: 13px; font-style: normal; font-size: 10px; vertical-align: top; }
.tree em.open { font-size: 6px; }
.l1 { padding-left: 7px; }
.l2 { padding-left: 23px; }
.l3 { padding-left: 55px; }
.tree .on { margin-left: 16px; padding-left: 6px; line-height: 22px; background: #dbdce2; border: solid #bdbfca; border-width: 1px 0 1px 1px; }
.foot { display: flex; gap: 12px; height: 50px; padding: 17px 0 0 68px; }
.foot .pick { width: 77px; height: 22px; }
.foot select { padding-left: 8px; border: 0; }
.foot .pick + .pick select { padding-left: 17px; }
.foot .pick::after { top: 9px; }

.canvas { flex: 1; min-width: 0; overflow: hidden; }
.page { position: relative; width: 100%; max-width: 952px; margin: 0 auto; background: #f8f8f8; box-shadow: 0 0 0 1px #a6a9b5; }
.first { height: 143px; margin-bottom: 23px; padding-top: 1px; }
.first hr { width: 600px; height: 1px; margin: 0 0 26px 144px; border: 0; background: #373d47; }
.second { height: 1000px; padding-top: 88px; }
.marks { display: flex; justify-content: space-between; height: 29px; padding: 0 115px; }
.marks i { width: 29px; border: solid #bdbfca; border-width: 1px 0 0; }
.marks .ml { border-right-width: 1px; }
.marks .mr { border-left-width: 1px; }
.marks.up i { border-top-width: 0; border-bottom-width: 1px; }
table { width: 600px; margin-left: 144px; border-collapse: collapse; table-layout: fixed; font: 14px/25px "DejaVu Sans", "Noto Sans CJK SC", sans-serif; }
.c1 { width: 107px; }
.c2 { width: 97px; }
.c3 { width: 120px; }
td { padding: 2px 0 0; border: 1px solid #5d626d; vertical-align: middle; white-space: nowrap; }
td div { height: 25px; padding-top: 1px; line-height: 25px; }
td:nth-child(-n + 2) div { padding-top: 3px; }
.sel td { padding-top: 0; }
.sel td div { height: 27px; padding-top: 0; }
.sel span { display: inline-block; height: 27px; padding: 3px 3px 0 0; line-height: 25px; background: #d4b731; }
.sel td:nth-child(n + 3) { background: #bdbfca; }
.opts { position: absolute; left: 65px; top: 149px; }
.cursor { position: absolute; left: 629px; top: 291px; }
.addcol { position: absolute; left: 746px; top: 439px; width: 10px; height: 36px; border-radius: 0 6px 6px 0; background: #737782; color: #f8f8f8; font: bold 13px/36px "Noto Sans", sans-serif; }

.scroll { display: flex; flex-direction: column; flex: none; width: 19px; background: #9598a3; }
.thumb { display: flex; align-items: center; justify-content: center; height: 65px; margin: 216px 3px auto; background: #dfe0e5; }
.thumb i { width: 8px; height: 9px; border: solid #5d626d; border-width: 1px 0; background: linear-gradient(#5d626d, #5d626d) center / 100% 1px no-repeat; }
.dock { flex: none; width: 7px; padding-top: 418px; background: #dbdce2; }
.dock button { display: block; width: 7px; height: 100px; background: #676b76; color: #f8f8f8; font-size: 8px; }

.status { display: flex; flex: none; align-items: center; height: 22px; padding-left: 8px; background: #dbdce2; white-space: nowrap; }
.status > * { flex: none; }
.s1 { margin-right: 11px; }
.s2 { margin-right: 5px; padding-right: 4px; border-right: 1px dotted #373d47; line-height: 14px; }
.s3 { margin-right: 7px; }
.status label { display: flex; align-items: center; gap: 3px; }
.status label input { width: 8px; height: 8px; margin: 0; border: 1px solid #373d47; appearance: none; }
.status label input:checked { background: #7d743c; }
.zoom { display: flex; align-items: center; margin-left: auto; padding-right: 3px; }
.view { margin-right: 23px; }
.zoom .tri { margin: 0 15px 0 -18px; }
.pct { width: 36px; margin-right: 4px; }
.zoom b { width: 12px; text-align: center; font-weight: 400; font-size: 18px; }
.zoom input { width: 135px; height: 12px; margin: 0 5px 0 6px; appearance: none; background: linear-gradient(#373d47, #373d47) center / 100% 1px no-repeat; }
.zoom input::-webkit-slider-thumb { appearance: none; width: 12px; height: 12px; border: 1px solid #676b76; border-radius: 50%; background: #f8f8f8; }
.zoom b + svg { margin-left: 6px; }

.taskbar { display: flex; flex: none; height: 40px; background: #373d47; color: #f8f8f8; }
.app-btn { display: flex; flex: none; align-items: center; justify-content: center; height: 40px; }
.app-btn.run { background: linear-gradient(#bdbfca, #bdbfca) center bottom / 40px 2px no-repeat; }
.tray { display: flex; align-items: center; margin-left: auto; padding-right: 18px; }
.temp { width: 22px; height: 22px; margin: 0 14px 0 12px; border: 1px dotted #bdbfca; border-radius: 50%; font-size: 11px; line-height: 20px; text-align: center; }
time { width: 64px; line-height: 19px; text-align: center; white-space: nowrap; }
.note { position: relative; width: 22px; margin-left: 15px; }
.note b { position: absolute; right: 0; bottom: -3px; font-size: 12px; line-height: 14px; }

.mark-top { position: absolute; right: 38px; top: 38px; width: 420px; height: 60px; }
.mark-top > * { position: absolute; white-space: nowrap; }
.mark-top svg { left: 142px; top: 0; }
.org { left: 0; top: 4px; color: #f8f8f8; font: bold 32px/38px "Noto Sans CJK SC", sans-serif; text-shadow: 0 0 2px #8a8d98, 0 0 3px #bdbfca; }
.show { left: 150px; top: 6px; color: #858995; font: bold 45px/46px "Noto Sans CJK SC", sans-serif; }
.en { left: 164px; top: 4px; color: #f1f1f4; font: 500 31px/38px "Noto Sans", sans-serif; }
.tail { right: 0; top: 6px; color: #f8f8f8; font: bold 30px/38px "Noto Sans CJK SC", sans-serif; text-shadow: 0 0 2px #8a8d98, 0 0 3px #bdbfca; }
.mark-bottom { position: absolute; right: 67px; bottom: 46px; display: flex; align-items: center; gap: 4px; color: #f8f8f8; }
.mark-bottom div { display: flex; flex-direction: column; }
.mark-bottom strong { font: bold 39px/42px "Noto Sans CJK SC", sans-serif; text-shadow: 0 0 2px #373d47, 0 0 3px #373d47; }
.mark-bottom em { font: bold 23px/26px "Noto Sans", sans-serif; text-shadow: 0 0 2px #373d47, 0 0 3px #373d47; }
</style>
